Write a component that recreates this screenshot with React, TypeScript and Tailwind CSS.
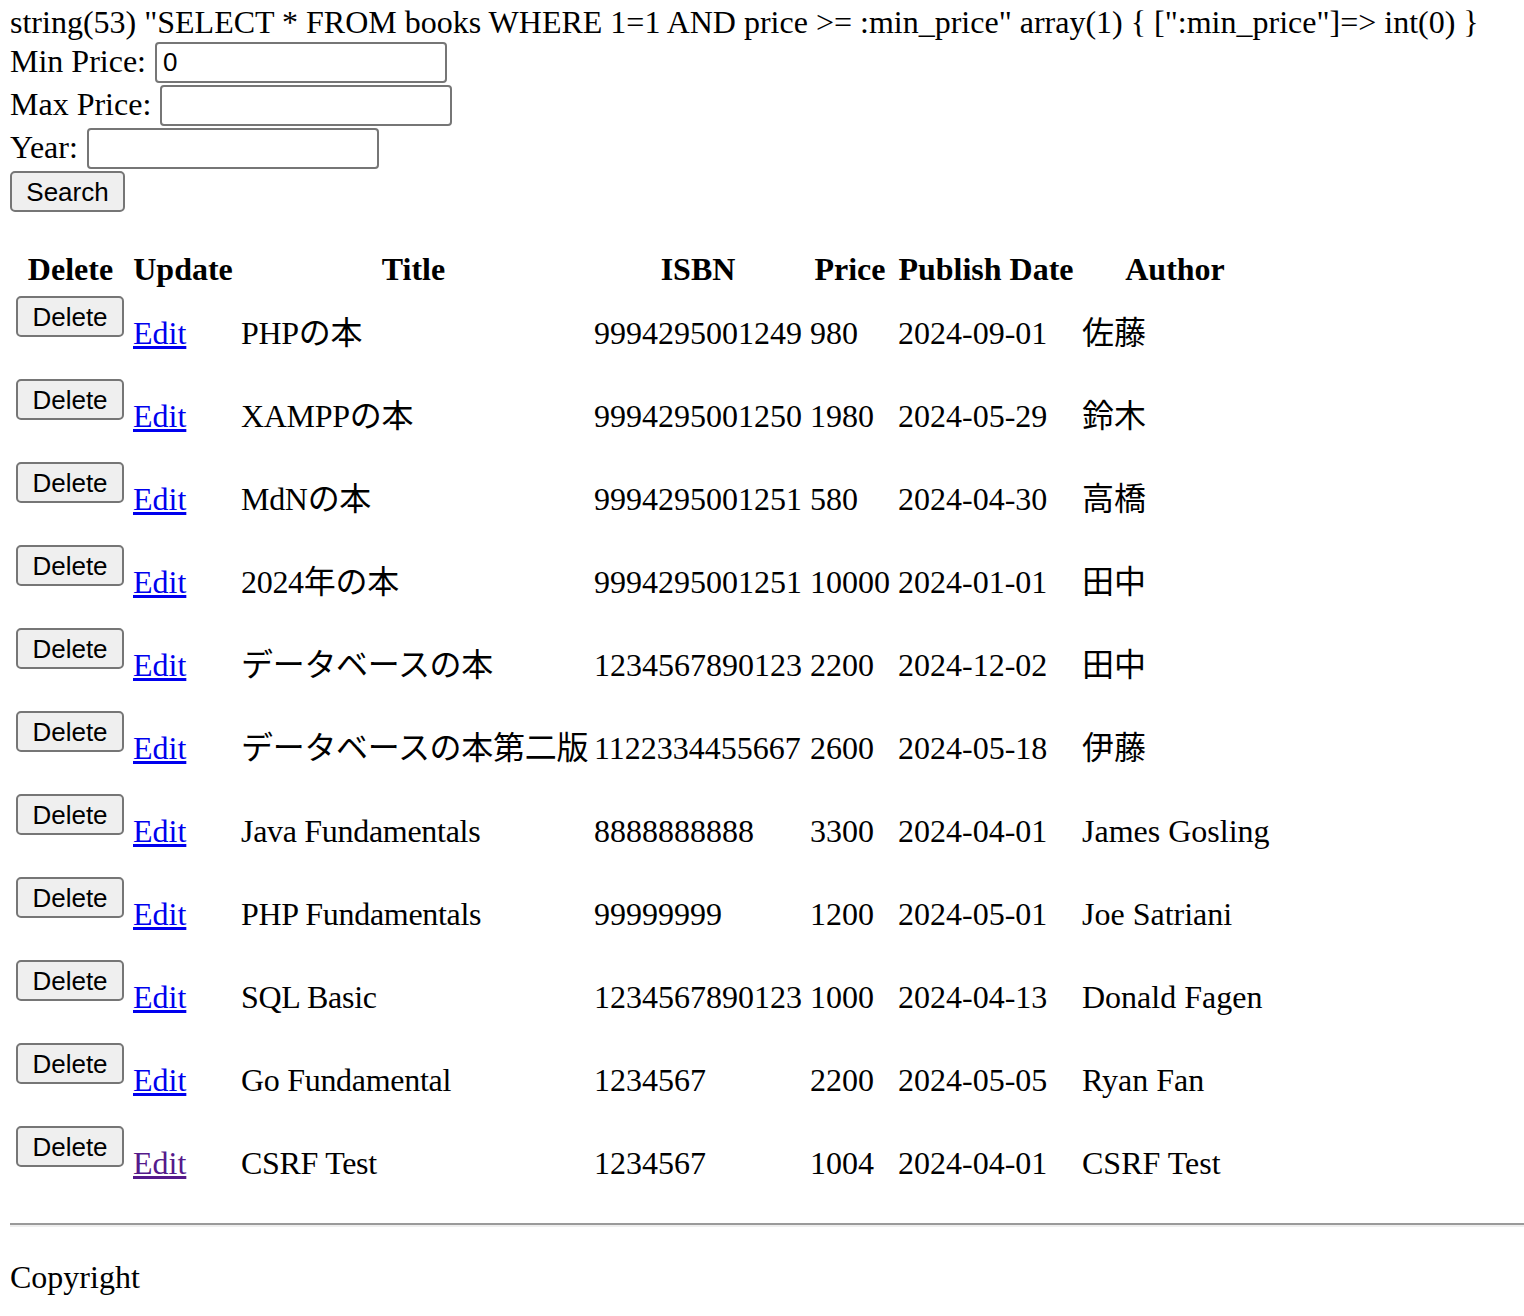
import React from 'react'

const books = [
  { title: 'PHPの本', isbn: '9994295001249', price: '980', date: '2024-09-01', author: '佐藤' },
  { title: 'XAMPPの本', isbn: '9994295001250', price: '1980', date: '2024-05-29', author: '鈴木' },
  { title: 'MdNの本', isbn: '9994295001251', price: '580', date: '2024-04-30', author: '高橋' },
  { title: '2024年の本', isbn: '9994295001251', price: '10000', date: '2024-01-01', author: '田中' },
  { title: 'データベースの本', isbn: '1234567890123', price: '2200', date: '2024-12-02', author: '田中' },
  { title: 'データベースの本第二版', isbn: '1122334455667', price: '2600', date: '2024-05-18', author: '伊藤' },
  { title: 'Java Fundamentals', isbn: '8888888888', price: '3300', date: '2024-04-01', author: 'James Gosling' },
  { title: 'PHP Fundamentals', isbn: '99999999', price: '1200', date: '2024-05-01', author: 'Joe Satriani' },
  { title: 'SQL Basic', isbn: '1234567890123', price: '1000', date: '2024-04-13', author: 'Donald Fagen' },
  { title: 'Go Fundamental', isbn: '1234567', price: '2200', date: '2024-05-05', author: 'Ryan Fan' },
  { title: 'CSRF Test', isbn: '1234567', price: '1004', date: '2024-04-01', author: 'CSRF Test', visited: true },
]

const serif = "font-['Liberation_Serif','Noto_Sans_CJK_JP',serif]"
const sans = "font-['Liberation_Sans',Arial,sans-serif]"

const Field = ({ label, value }: { label: string; value?: string }) => {
  return (
    <div className="flex h-[43px] items-center gap-[9px]">
      <span className="-mt-[3px]">{label}</span>
      <input
        type="text"
        defaultValue={value}
        className={`${sans} h-[41px] w-[292px] rounded-[4px] border-2 border-[#767676] bg-white px-[6px] text-[26px] text-black outline-none`}
      />
    </div>
  )
}

const Button = ({ children, className = '' }: { children: React.ReactNode; className?: string }) => {
  return (
    <button
      className={`${sans} h-[41px] rounded-[5px] border-2 border-[#767676] bg-[#efefef] px-[14px] text-[26px] leading-none text-black ${className}`}
    >
      {children}
    </button>
  )
}

const App = () => {
  return (
    <div className={`${serif} min-h-[1316px] bg-white pl-[10px] text-[32px] leading-[37px] text-black`}>
      <div className="flex h-[41px] items-center whitespace-nowrap pt-[4px]">
        string(53) "SELECT * FROM books WHERE 1=1 AND price &gt;= :min_price" array(1) {'{'} [":min_price"]=&gt; int(0) {'}'}
      </div>
      <Field label="Min Price:" value="0" />
      <Field label="Max Price:" />
      <Field label="Year:" />
      <div className="flex h-[43px] items-center">
        <Button className="w-[115px]">Search</Button>
      </div>

      <table className="mt-[32px] w-[1264px] table-fixed border-separate border-spacing-[4px]">
        <thead>
          <tr>
            <th className="w-[113px] p-[2px] align-middle font-bold">Delete</th>
            <th className="w-[104px] p-[2px] align-middle font-bold">Update</th>
            <th className="w-[349px] p-[2px] align-middle font-bold">Title</th>
            <th className="w-[212px] p-[2px] align-middle font-bold">ISBN</th>
            <th className="w-[84px] p-[2px] align-middle font-bold">Price</th>
            <th className="w-[180px] whitespace-nowrap p-[2px] align-middle font-bold">Publish Date</th>
            <th className="w-[190px] p-[2px] align-middle font-bold">Author</th>
          </tr>
        </thead>
        <tbody>
          {books.map((b, i) => (
            <tr key={i}>
              <td className="p-[2px] align-middle">
                <div className="mb-[32px] h-[43px]">
                  <Button className="w-[108px]">Delete</Button>
                </div>
              </td>
              <td className="p-[2px] align-middle">
                <a
                  href="#"
                  className={b.visited ? 'text-[#551a8b] underline' : 'text-[#0000ee] underline'}
                >
                  Edit
                </a>
              </td>
              <td className="whitespace-nowrap p-[2px] align-middle tracking-[-0.3px]">{b.title}</td>
              <td className="whitespace-nowrap p-[2px] align-middle">{b.isbn}</td>
              <td className="whitespace-nowrap p-[2px] align-middle">{b.price}</td>
              <td className="whitespace-nowrap p-[2px] align-middle">{b.date}</td>
              <td className="whitespace-nowrap p-[2px] align-middle">{b.author}</td>
            </tr>
          ))}
        </tbody>
      </table>

      <hr className="mt-[16px] border-t-2 border-b-2 border-t-[#9a9a9a] border-b-[#eeeeee]" />
      <p className="mt-[32px]">Copyright</p>
    </div>
  )
}

export default App
